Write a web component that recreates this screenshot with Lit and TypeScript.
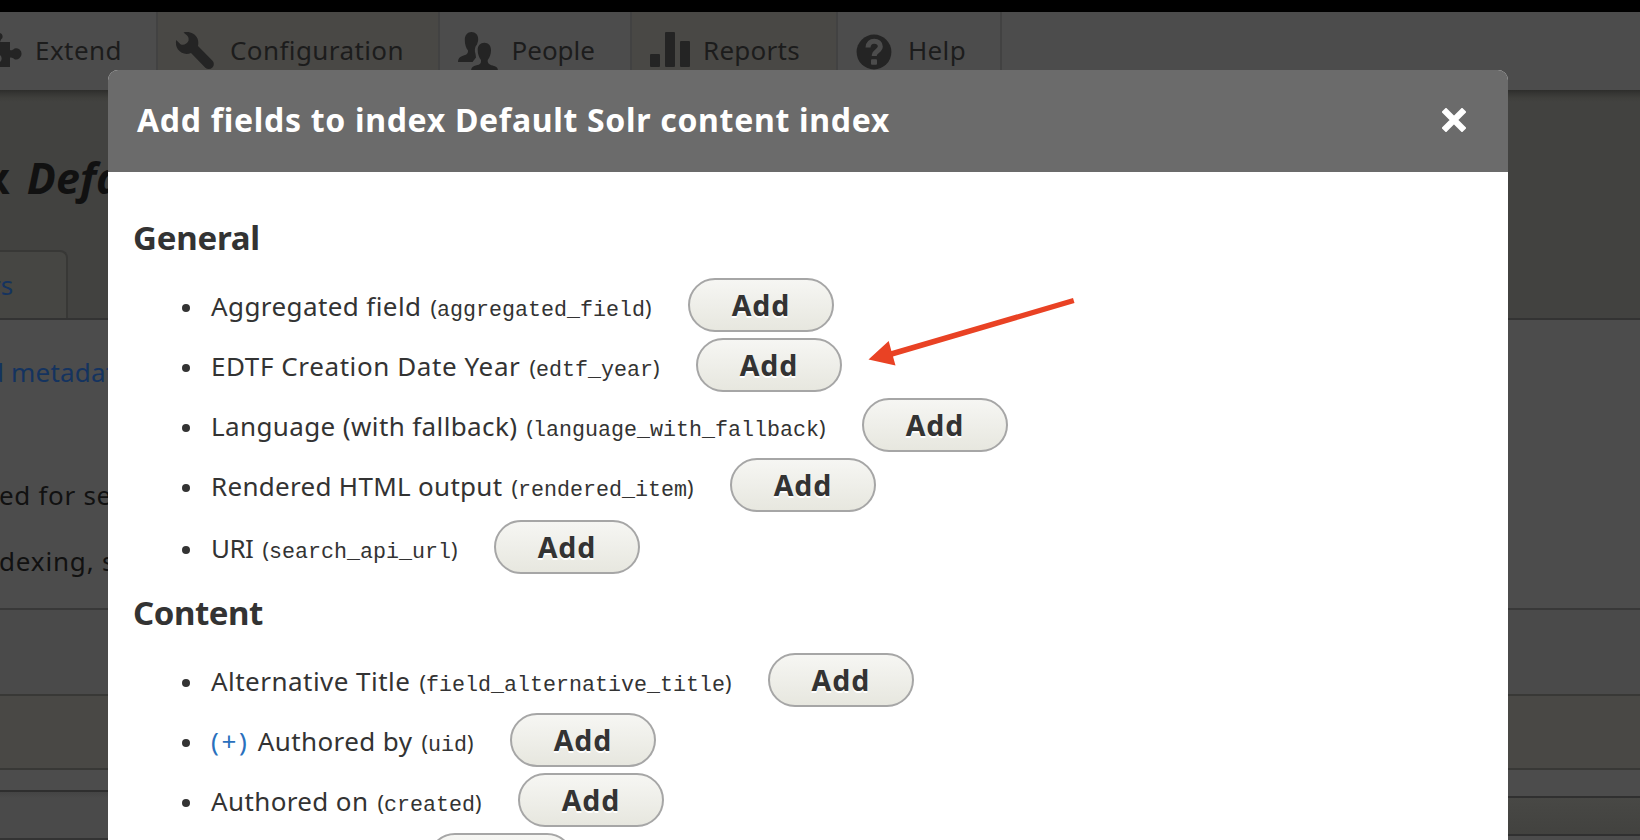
import { LitElement, html, css, svg, nothing } from "lit";
import { customElement, property } from "lit/decorators.js";

/** Text that is tracked so that its line takes exactly the given width. */
@customElement("fit-text")
class FitText extends LitElement {
  @property({ type: Number }) width = 0;
  @property() text = "";

  static styles = css`
    :host { display: inline-block; white-space: pre; }
    .run { display: inline-block; white-space: pre; }
  `;

  render() {
    return html`<span class="run">${this.text}</span>`;
  }

  firstUpdated() {
    const run = this.renderRoot.querySelector(".run") as HTMLElement;
    const natural = run.getBoundingClientRect().width;
    run.style.letterSpacing = `${(this.width - natural) / this.text.length}px`;
  }
}

interface Field { name: string; code: string; width: number; expand?: boolean; }

const GENERAL: Field[] = [
  { name: "Aggregated field", code: "aggregated_field", width: 210.4 },
  { name: "EDTF Creation Date Year", code: "edtf_year", width: 309.4 },
  { name: "Language (with fallback)", code: "language_with_fallback", width: 306.4 },
  { name: "Rendered HTML output", code: "rendered_item", width: 291.4 },
  { name: "URI", code: "search_api_url", width: 42.4 },
];

const CONTENT: Field[] = [
  { name: "Alternative Title", code: "field_alternative_title", width: 199.4 },
  { name: "Authored by", code: "uid", width: 154.7, expand: true },
  { name: "Authored on", code: "created", width: 157.4 },
  { name: "Boost", code: "boost", width: 93.4 },
];

const TABS = [
  {
    label: "Extend", width: 87, cls: "t-extend", box: "0 12 35 76",
    icon: svg`<path d="M0 33a3.6 3.6 0 0 1 1 6.500l-1 2.500h10v8c1.500 1 3-.5 4.500-1.600a5.600 5.600 0 1 1 0 10.800c-1.500-1-3-2.200-4.500-1.400v9.200H0v-5a4.500 4.500 0 0 0 0-7z"/>`,
  },
  {
    label: "Configuration", width: 174, cls: "t-config", box: "158 12 72 76",
    icon: svg`<path d="M183.500 32.600C189 31 195 33.500 197.500 38.500c1 2.500 1 5 .5 7.500l14.300 14.500a5 5 0 0 1-7 7.200L191 53c-5 2-10 .5-13-3.500-2-3-2.500-6-1.800-9.500l4.300 4.300c3 1.500 7-.5 8-3.500.5-2.700-.5-4.300-2-5.700z"/>`,
  },
  {
    label: "People", width: 83.5, cls: "t-people", box: "440 12 71.5 76",
    icon: svg`<path d="M471.500 32c4 0 6.700 3 6.700 7.300 0 2-.7 3.600-1.200 5.200-2.500 2.500-2.600 6-1.500 9.500l.5 3.500-3.500 4.500H458c0-3.500 1.500-5.200 5-6.200 3.500-1 5.200-2 5-5.200-2-2.500-3.200-6-3.200-10.500 0-5 2.700-8.100 6.700-8.100z"/><path d="M484.300 42.700c4.200 0 6.700 3 6.700 7.300 0 4-1.200 7.500-3.300 10-.2 3.500 1.500 4.700 5 5.500 3.500 1 5 2 5.300 5h-27c.3-3 2-4.200 5.500-5.200 3.500-.8 4.800-1.800 4.500-5.300-2-2.500-3.300-6-3.300-10 0-4.300 2.600-7.300 6.600-7.300z"/>`,
  },
  {
    label: "Reports", width: 97, cls: "t-reports", box: "632 12 71 76",
    icon: svg`<rect x="650" y="54" width="10" height="13" rx="1"/><rect x="665" y="32" width="10" height="35" rx="1"/><rect x="680" y="41" width="10" height="26" rx="1"/>`,
  },
  {
    label: "Help", width: 58, cls: "t-help", box: "838 12 70 76",
    icon: svg`<circle cx="874" cy="52" r="17.400"/><path class="cut" d="M868 47.500c.2-4 2.700-6.200 6.200-6.200 3.600 0 6.100 2 6.100 5.200 0 4.500-6.100 4.500-6.100 9.500"/><rect class="dot" x="871" y="59.300" width="6" height="5.500" rx="1"/>`,
  },
];

@customElement("app-root")
class AppRoot extends LitElement {
  static styles = css`
    :host {
      display: block; position: relative; width: 1640px; height: 840px; overflow: hidden;
      background: #4c4c4c; color: #333;
      font: 26px/60px "Noto Sans", sans-serif;
    }
    .page { height: 840px; display: flex; flex-direction: column; color: #111; white-space: nowrap; }
    .bar { flex: none; height: 12px; background: #000; }
    .tray { flex: none; height: 78px; display: flex; background: #4c4c4c; color: #1c1c1c; line-height: 76px; }
    .tab { box-sizing: border-box; height: 78px; display: flex; border-right: 2px solid #424242; }
    .tab svg { flex: none; height: 76px; fill: #242424; }
    .t-extend { width: 158px; } .t-extend svg { width: 35px; }
    .t-config { width: 282px; background: #494845; } .t-config svg { width: 72px; }
    .t-people { width: 192px; } .t-people svg { width: 71.500px; }
    .t-reports { width: 206px; background: #494845; } .t-reports svg { width: 71px; }
    .t-help { width: 164px; } .t-help svg { width: 70px; }
    .cut { fill: none; stroke: #4c4c4c; stroke-width: 5; }
    .dot { fill: #4c4c4c; }
    .head {
      flex: none; box-sizing: border-box; height: 230px; border-bottom: 2px solid #333;
      display: flex; flex-direction: column; justify-content: space-between;
      background: linear-gradient(#2d2d2b, #353533 3px, #3f3f3c 8px, #424240 12px, #424240);
    }
    .title { margin: 0; padding-top: 58px; font-size: 43px; line-height: 60px; font-weight: 700; display: flex; gap: 17px; }
    .title .x { margin-left: -15px; }
    .local { box-sizing: border-box; width: 68px; height: 68px; border: solid #383836; border-width: 2px 2px 0 0; border-radius: 0 8px 0 0; background: #464643; color: #14335f; line-height: 67px; }
    .local .txt { margin-left: -10px; display: block; }
    .line1 { padding-top: 22px; color: #14335f; height: 145px; box-sizing: border-box; flex: none; }
    .line1 .txt { margin-left: -12px; display: block; line-height: 60px; }
    .line2 { flex: none; height: 66px; }
    .line2 .txt, .line3 .txt { display: block; margin-left: -1px; }
    .line3 { flex: none; height: 77px; }
    .r1 { flex: none; box-sizing: border-box; height: 86px; border-top: 2px solid #383838; background: #4a4a4a; }
    .r2 { flex: none; box-sizing: border-box; height: 76px; border: solid #383836; border-width: 2px 0; background: #494845; }
    .foot { flex: 1; display: flex; justify-content: space-between; }
    .fl { width: 108px; display: flex; flex-direction: column; }
    .fl .a { height: 20px; }
    .fl .b { height: 46px; border-top: 2px solid #2e2e2e; background: linear-gradient(#444, #4a4a4a 6px); }
    .fl .c { height: 2px; background: #333; }
    .fr { width: 132px; display: flex; flex-direction: column; }
    .fr .a { height: 26px; }
    .fr .b { height: 36px; border: solid #303030; border-width: 2px 0; background: linear-gradient(#484845, #42423f); }

    .dialog { position: absolute; left: 108px; top: 70px; width: 1400px; height: 770px; border-radius: 10px 10px 0 0; overflow: hidden; background: #fff; }
    .dhead { box-sizing: border-box; height: 102px; background: #6b6b6b; color: #fff; display: flex; justify-content: space-between; align-items: center; padding: 0 42px 3px 29px; font-size: 32px; font-weight: 700; line-height: 99px; }
    .dhead svg { width: 24px; height: 24px; margin-top: 1px; }
    .body { padding-left: 24px; }
    h3 { margin: 0; font-size: 33px; line-height: 50px; font-weight: 700; }
    .h-general { padding: 41px 0 0 1px; height: 65px; }
    .h-content { padding: 8px 0 0 1px; height: 65px; }
    .list { margin: 0; padding: 0; list-style: none; }
    .row { display: flex; align-items: baseline; height: 60px; line-height: 54px; padding-left: 50px; white-space: pre; }
    .general .row:last-child { padding-top: 2px; }
    .bullet { width: 8px; height: 8px; border-radius: 50%; background: #333; align-self: flex-start; margin: 26px 21px 0 0; }
    .plus { color: #2a70bd; margin-right: 8.200px; }
    .code { margin-left: 7.200px; font-size: 21.667px; display: flex; align-items: baseline; }
    .paren { width: 8.400px; display: flex; justify-content: flex-end; }
    .paren.close { justify-content: flex-start; }
    .mono { font-family: "Liberation Mono", monospace; }
    .add {
      box-sizing: border-box; width: 146px; height: 54px; margin: 0 0 0 34.600px; padding: 0;
      border: 2px solid #a6a6a6; border-radius: 27px; background: linear-gradient(#f6f6f3, #e7e7df);
      font: 700 28.500px/50px "Noto Sans", sans-serif; color: #333; text-shadow: 0 2px #fff; text-align: center;
    }
    .arrow { position: absolute; left: 860px; top: 290px; width: 230px; height: 85px; fill: #e94224; stroke: none; }
  `;

  private row(f: Field) {
    return html`<li class="row"><span class="bullet"></span>${f.expand
      ? html`<fit-text class="plus" text="(+)" width="38.5"></fit-text>`
      : nothing}<fit-text .text=${f.name} .width=${f.width}></fit-text><span class="code"><span class="paren">(</span><span class="mono">${f.code}</span><span class="paren close">)</span></span><button class="add"><fit-text text="Add" width="58.5"></fit-text></button></li>`;
  }

  render() {
    return html`
      <div class="page">
        <div class="bar"></div>
        <nav class="tray">
          ${TABS.map((t) => html`<div class="tab ${t.cls}"><svg viewBox=${t.box}>${t.icon}</svg><fit-text .text=${t.label} .width=${t.width}></fit-text></div>`)}
        </nav>
        <header class="head">
          <h1 class="title"><span class="x">x</span><em>Default</em></h1>
          <div class="local"><span class="txt">rs</span></div>
        </header>
        <div class="line1"><fit-text class="txt" text="d metadata" width="142"></fit-text></div>
        <div class="line2"><fit-text class="txt" text="ed for search" width="169"></fit-text></div>
        <div class="line3"><fit-text class="txt" text="dexing, so" width="133"></fit-text></div>
        <div class="r1"></div>
        <div class="r2"></div>
        <div class="foot">
          <div class="fl"><div class="a"></div><div class="b"></div><div class="c"></div></div>
          <div class="fr"><div class="a"></div><div class="b"></div></div>
        </div>
      </div>
      <section class="dialog">
        <div class="dhead">
          <fit-text text="Add fields to index Default Solr content index" width="753"></fit-text>
          <svg viewBox="0 0 24 24"><path d="M4 4L20 20M20 4L4 20" stroke="#fff" stroke-width="6.200" stroke-linecap="square" stroke-linejoin="round"/></svg>
        </div>
        <div class="body">
          <h3 class="h-general"><fit-text text="General" width="127"></fit-text></h3>
          <ul class="list general">${GENERAL.map((f) => this.row(f))}</ul>
          <h3 class="h-content"><fit-text text="Content" width="130"></fit-text></h3>
          <ul class="list">${CONTENT.map((f) => this.row(f))}</ul>
        </div>
      </section>
      <svg class="arrow" viewBox="860 290 230 85">
        <path d="M868.500 359.600L888.700 341L891.400 351L1073 298L1074.500 303L893 356.500L895.500 365.500Z"/>
      </svg>
    `;
  }
}
